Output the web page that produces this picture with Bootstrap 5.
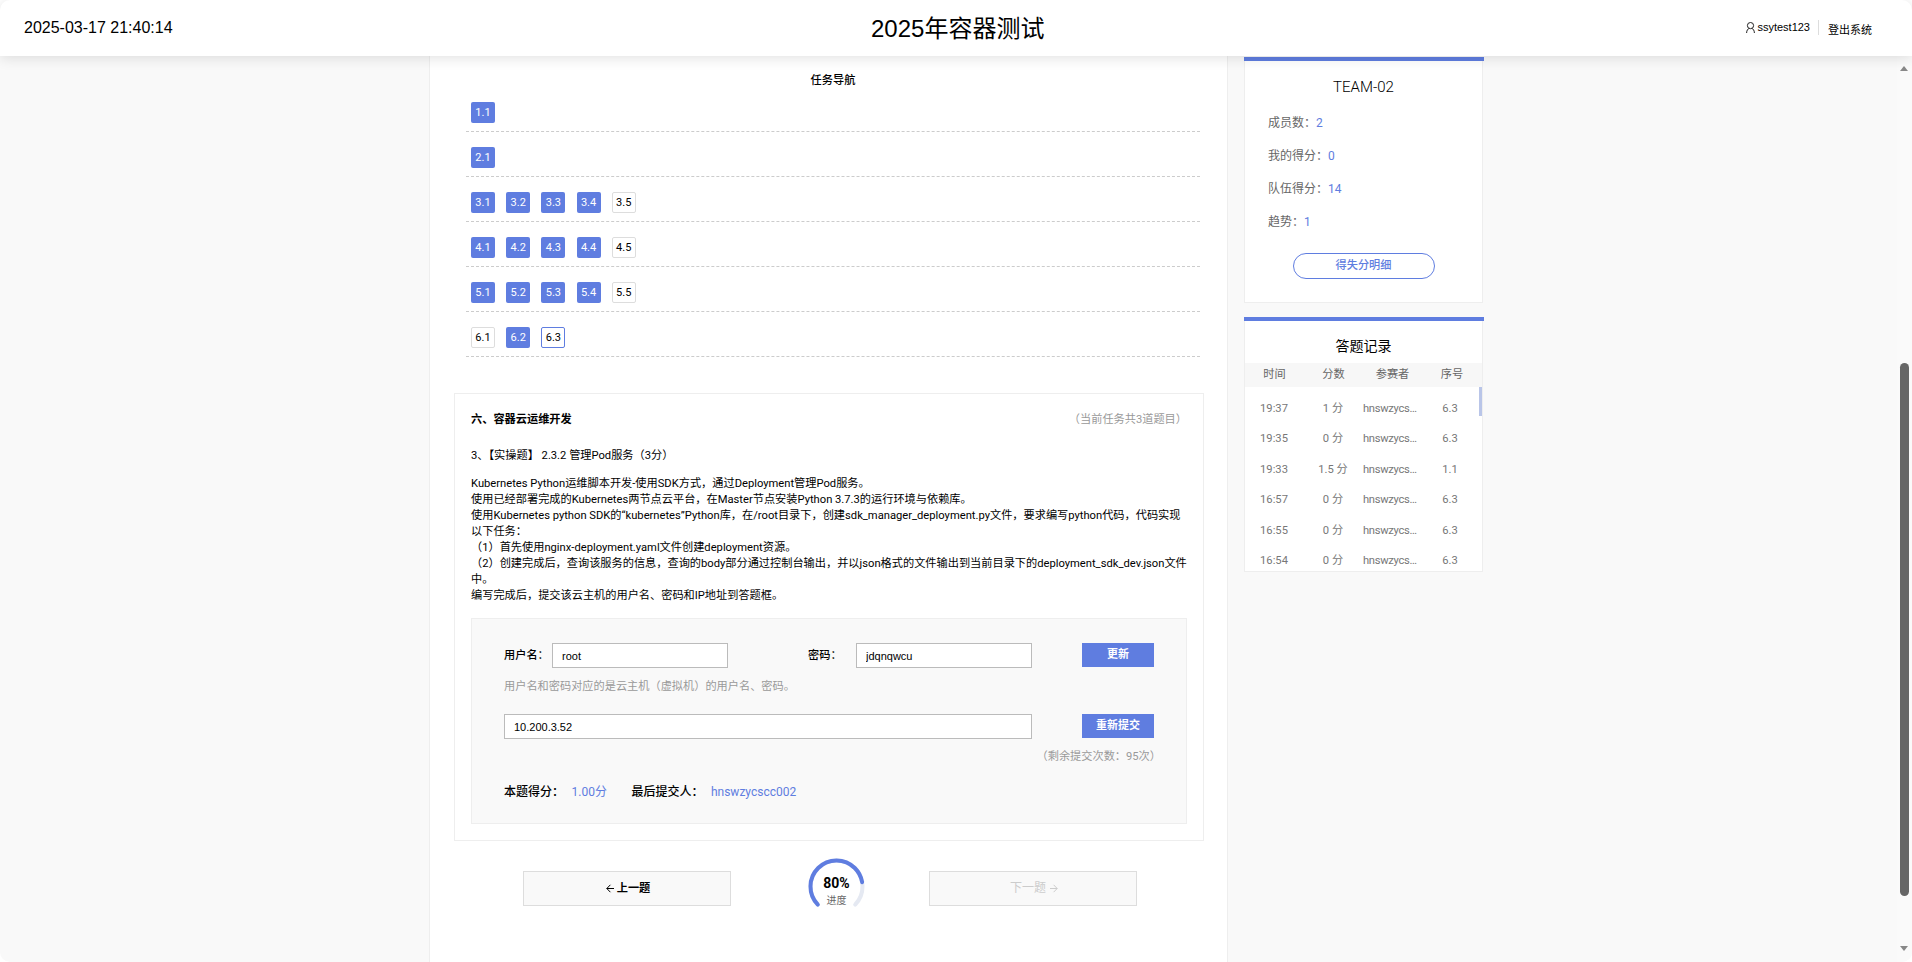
<!DOCTYPE html>
<html lang="zh">
<head>
<meta charset="utf-8">
<title>2025年容器测试</title>
<link href="https://cdn.jsdelivr.net/npm/bootstrap@5.3.0/dist/css/bootstrap.min.css" rel="stylesheet">
<style>
:root{--blue:#5f7de0}
html,body{height:100%;overflow:hidden}
html{background:#fff}
body{font-family:Roboto,"Noto Sans CJK SC",sans-serif;font-size:11.2px;line-height:16px;color:#000;background:#fff}
.topbar{height:56px;background:#fff;border-radius:10px 10px 0 0;box-shadow:0 2px 14px rgba(0,0,0,.12);position:relative;z-index:5;padding:0 40px 0 24px;font-family:"Liberation Sans","Noto Sans CJK SC",sans-serif}
.clock{font-size:16px;width:722px;margin-top:-1px}
.apptitle{font-size:24px;line-height:32px;margin:2px 0 0 125px;margin-right:auto}
.usericon{width:9px;height:11px;margin-right:2px}
.userbox{padding-right:8px;border-right:1px solid #ddd;line-height:15px;margin-right:9px;margin-top:-1px;font-size:11px}
.logout{margin-top:3px;font-size:11px}
.stage{height:906px;overflow:hidden;background:#f9f9f9;border-radius:0 0 10px 10px}
.mainpanel{width:799px;margin-left:429px;background:#fff;border:solid #eee;border-width:0 1px;flex:none;height:906px;overflow:hidden}
.navwrap{margin-left:36px;width:734px}
.navhead{font-weight:500;text-align:center;margin-top:17px;height:14px}
.navrow{height:45px;padding:15px 0 0 5px;border-bottom:1px dashed #ccc;gap:11.2px}
.chip{width:24px;height:21px;border-radius:2px;background:var(--blue);color:#fff;font-size:11px;line-height:22px;text-align:center;flex:none}
.chip.open{background:#fff;color:#000;border:1px solid #ddd;line-height:20px}
.chip.now{background:#fff;color:#000;border:1px solid var(--blue);line-height:20px}
.taskcard{margin:36px 0 0 24px;width:750px;height:448px;border:1px solid #eee;padding:18px 16px 0;flex:none}
.tasktitle{font-weight:700}
.muted{color:#999}
.qline{margin-top:20px}
.qbody{margin-top:12px}
.qbody p{margin:0}
.answerbox{margin-top:14px;height:206px;background:#f9f9f9;border:1px solid #eee;padding:24px 32px 0}
.flabel{width:48px;flex:none;line-height:25px;font-weight:500}
.finput{width:176px;height:25px;border:1px solid #bbb;border-radius:0;padding:0 9px;font:11px "Liberation Sans",sans-serif;color:#000;flex:none;background:#fff}
.finput.wide{width:528px;flex:none}
.gofrom{margin-left:80px}
.submitbtn{width:72px;height:24px;margin-left:50px;padding:0;border:0;border-radius:0;background:var(--blue);color:#fff;font-size:11px;font-weight:700;line-height:24px;flex:none}
.hintline{margin-top:11px}
.rowtwo{margin-top:19px}
.remain{margin:10px -7px 0 0;text-align:right}
.scoreline{margin-top:19px;font-size:12px;font-weight:500;gap:24.5px}
.scoreline span{color:var(--blue);font-weight:400}
.scoreline b{font-weight:500;margin-right:7.5px}
.pagerrow{margin-top:17px;padding-left:93px}
.pagebtn{width:208px;height:35px;margin-top:13px;border:1px solid #ddd;background:#f9f9f9;border-radius:0;font-size:11.2px;font-weight:700;padding:0 0 0 2px;line-height:33px;flex:none;color:#000}
.pagebtn.off{color:#ccc;font-size:12px;font-weight:400;opacity:1;background:#f9f9f9;border-color:#ddd}
.arrowmark{width:8px;height:9px;vertical-align:-1px}
.arrowmark.lead-arrow{margin-right:3px}
.arrowmark.trail-arrow{margin-left:1px}
.gauge{position:relative;width:57px;height:56px;margin:0 64px 0 77px;flex:none}
.gauge svg{display:block}
.gaugepct{position:absolute;left:0;right:0;top:17px;text-align:center;font-size:14px;font-weight:700;line-height:16px}
.gaugecap{position:absolute;left:0;right:0;top:37px;text-align:center;font-size:10px;color:#666;line-height:12px}
.sidecol{width:240px;margin-left:16px;margin-top:1px;flex:none}
.sidecard{border:1px solid #eee;border-top:0;border-radius:0;background:#fff;width:239px;position:relative}
.sidebar-top{height:4px;background:var(--blue);width:240px;margin-left:-1px}
.teamname{font-size:15px;font-weight:300;text-align:center;line-height:20px;margin:16px 0 1px}
.statline{color:#666;font-size:12px;line-height:16px;margin-left:23px;margin-top:17px}
.statline span{color:var(--blue)}
.detailbtn{width:142px;height:26px;margin:23px auto 23px;display:block;padding:0;border:1px solid var(--blue);border-radius:13px;background:#fff;color:var(--blue);font-size:11.2px;font-weight:500;line-height:24px}
.recordcard{margin-top:14px;height:255px}
.rectitle{font-size:14px;text-align:center;line-height:20px;margin-top:15px;height:27px}
.rechead{height:24px;background:#f7f7f7;color:#666;line-height:24px}
.rechead div,.recrow div{flex:none;text-align:center}
.c1{width:59px}.c2{width:59px}.c3{width:59px}.c4{width:60px}
.reclist{height:184px;overflow:hidden;position:relative}
.reclist-inner{padding-top:7px}
.recrow{height:30.4px;line-height:30.4px;color:#777}
.recrow .nm{width:56px;margin-left:0;margin-right:2px;overflow:hidden;white-space:nowrap;text-overflow:ellipsis;text-align:left;letter-spacing:-.3px}
.recrow .tm{width:58px}.recrow .sc{width:60px}.recrow .no{width:60px;padding-right:2px}
.recbar{position:absolute;right:0;top:0;width:3px;height:29px;background:#b9c5e8}
.scrollrail{width:15px;height:906px;background:#fafafa;margin-left:auto;padding:10px 3px 0;flex:none}
.rail-up,.rail-down{width:0;height:0;border-left:4.5px solid transparent;border-right:4.5px solid transparent;flex:none}
.rail-up{border-bottom:5px solid #888}
.rail-down{border-top:5px solid #888;margin-bottom:11px}
.railthumb{width:9px;height:533px;border-radius:5px;background:#666;margin-top:292px;flex:none}
</style>
</head>
<body>
<header class="topbar d-flex align-items-center">
  <div class="clock">2025-03-17 21:40:14</div>
  <div class="apptitle">2025年容器测试</div>
  <div class="userbox d-flex align-items-center">
    <svg class="usericon" viewBox="0 0 9 11" fill="none" stroke="#222" stroke-width="1"><circle cx="4.5" cy="3.6" r="3.1"/><path d="M.6 11c0-2.6 1.4-4.3 2.6-4.6M8.4 11c0-2.6-1.4-4.3-2.6-4.6"/></svg>
    <span>ssytest123</span>
  </div>
  <div class="logout">登出系统</div>
</header>
<div class="stage d-flex">
  <main class="mainpanel d-flex flex-column">
    <section class="navwrap">
      <div class="navhead">任务导航</div>
      <div class="navrow d-flex"><div class="chip">1.1</div></div>
      <div class="navrow d-flex"><div class="chip">2.1</div></div>
      <div class="navrow d-flex"><div class="chip">3.1</div><div class="chip">3.2</div><div class="chip">3.3</div><div class="chip">3.4</div><div class="chip open">3.5</div></div>
      <div class="navrow d-flex"><div class="chip">4.1</div><div class="chip">4.2</div><div class="chip">4.3</div><div class="chip">4.4</div><div class="chip open">4.5</div></div>
      <div class="navrow d-flex"><div class="chip">5.1</div><div class="chip">5.2</div><div class="chip">5.3</div><div class="chip">5.4</div><div class="chip open">5.5</div></div>
      <div class="navrow d-flex"><div class="chip open">6.1</div><div class="chip">6.2</div><div class="chip now">6.3</div></div>
    </section>
    <section class="taskcard">
      <div class="d-flex justify-content-between"><div class="tasktitle">六、容器云运维开发</div><div class="muted">（当前任务共3道题目）</div></div>
      <div class="qline">3、【实操题】 2.3.2 管理Pod服务（3分）</div>
      <div class="qbody">
        <p>Kubernetes Python运维脚本开发-使用SDK方式，通过Deployment管理Pod服务。</p>
        <p>使用已经部署完成的Kubernetes两节点云平台，在Master节点安装Python 3.7.3的运行环境与依赖库。</p>
        <p>使用Kubernetes python SDK的“kubernetes”Python库，在/root目录下，创建sdk_manager_deployment.py文件，要求编写python代码，代码实现以下任务：</p>
        <p>（1）首先使用nginx-deployment.yaml文件创建deployment资源。</p>
        <p>（2）创建完成后，查询该服务的信息，查询的body部分通过控制台输出，并以json格式的文件输出到当前目录下的deployment_sdk_dev.json文件中。</p>
        <p>编写完成后，提交该云主机的用户名、密码和IP地址到答题框。</p>
      </div>
      <div class="answerbox">
        <div class="d-flex">
          <div class="flabel">用户名：</div><input class="form-control finput" value="root">
          <div class="flabel gofrom">密码：</div><input class="form-control finput" value="jdqnqwcu">
          <button class="btn submitbtn">更新</button>
        </div>
        <div class="muted hintline">用户名和密码对应的是云主机（虚拟机）的用户名、密码。</div>
        <div class="d-flex rowtwo">
          <input class="form-control finput wide" value="10.200.3.52">
          <button class="btn submitbtn">重新提交</button>
        </div>
        <div class="muted remain">（剩余提交次数：95次）</div>
        <div class="scoreline d-flex"><div><b>本题得分：</b><span>1.00分</span></div><div><b>最后提交人：</b><span>hnswzycscc002</span></div></div>
      </div>
    </section>
    <section class="pagerrow d-flex align-items-start">
      <button class="btn pagebtn"><svg class="arrowmark lead-arrow" viewBox="0 0 8 9" fill="none" stroke="#000" stroke-width="1"><path d="M4.4 .8 .8 4.5l3.6 3.7M.8 4.5H8"/></svg>上一题</button>
      <div class="gauge">
        <svg width="57" height="56" viewBox="0 0 57 56" fill="none" stroke-width="4" stroke-linecap="round"><path d="M9.8 46.6A26 26 0 1 1 47.2 46.6" stroke="#e5e9f2"/><path d="M9.8 46.6A26 26 0 1 1 47.2 46.6" stroke="#5f7de0" pathLength="100" stroke-dasharray="80 100"/></svg>
        <div class="gaugepct">80%</div>
        <div class="gaugecap">进度</div>
      </div>
      <button class="btn pagebtn off" disabled>下一题 <svg class="arrowmark trail-arrow" viewBox="0 0 8 9" fill="none" stroke="#ccc" stroke-width="1"><path d="M3.6 .8 7.2 4.5 3.6 8.2M7.2 4.5H0"/></svg></button>
    </section>
  </main>
  <aside class="sidecol">
    <div class="card sidecard">
      <div class="sidebar-top"></div>
      <div class="teamname">TEAM-02</div>
      <div class="statline">成员数：<span>2</span></div>
      <div class="statline">我的得分：<span>0</span></div>
      <div class="statline">队伍得分：<span>14</span></div>
      <div class="statline">趋势：<span>1</span></div>
      <button class="btn detailbtn">得失分明细</button>
    </div>
    <div class="card sidecard recordcard">
      <div class="sidebar-top"></div>
      <div class="rectitle">答题记录</div>
      <div class="rechead d-flex"><div class="c1">时间</div><div class="c2">分数</div><div class="c3">参赛者</div><div class="c4">序号</div></div>
      <div class="reclist">
        <div class="recbar"></div>
        <div class="reclist-inner">
        <div class="recrow d-flex"><div class="tm">19:37</div><div class="sc">1 分</div><div class="nm">hnswzycscc002</div><div class="no">6.3</div></div>
        <div class="recrow d-flex"><div class="tm">19:35</div><div class="sc">0 分</div><div class="nm">hnswzycscc002</div><div class="no">6.3</div></div>
        <div class="recrow d-flex"><div class="tm">19:33</div><div class="sc">1.5 分</div><div class="nm">hnswzycscc002</div><div class="no">1.1</div></div>
        <div class="recrow d-flex"><div class="tm">16:57</div><div class="sc">0 分</div><div class="nm">hnswzycscc002</div><div class="no">6.3</div></div>
        <div class="recrow d-flex"><div class="tm">16:55</div><div class="sc">0 分</div><div class="nm">hnswzycscc002</div><div class="no">6.3</div></div>
        <div class="recrow d-flex"><div class="tm">16:54</div><div class="sc">0 分</div><div class="nm">hnswzycscc002</div><div class="no">6.3</div></div>
        </div>
      </div>
    </div>
  </aside>
  <div class="scrollrail d-flex flex-column">
    <div class="rail-up"></div>
    <div class="railthumb"></div>
    <div class="rail-down mt-auto"></div>
  </div>
</div>
<script src="https://cdn.jsdelivr.net/npm/bootstrap@5.3.0/dist/js/bootstrap.bundle.min.js"></script>
</body>
</html>
